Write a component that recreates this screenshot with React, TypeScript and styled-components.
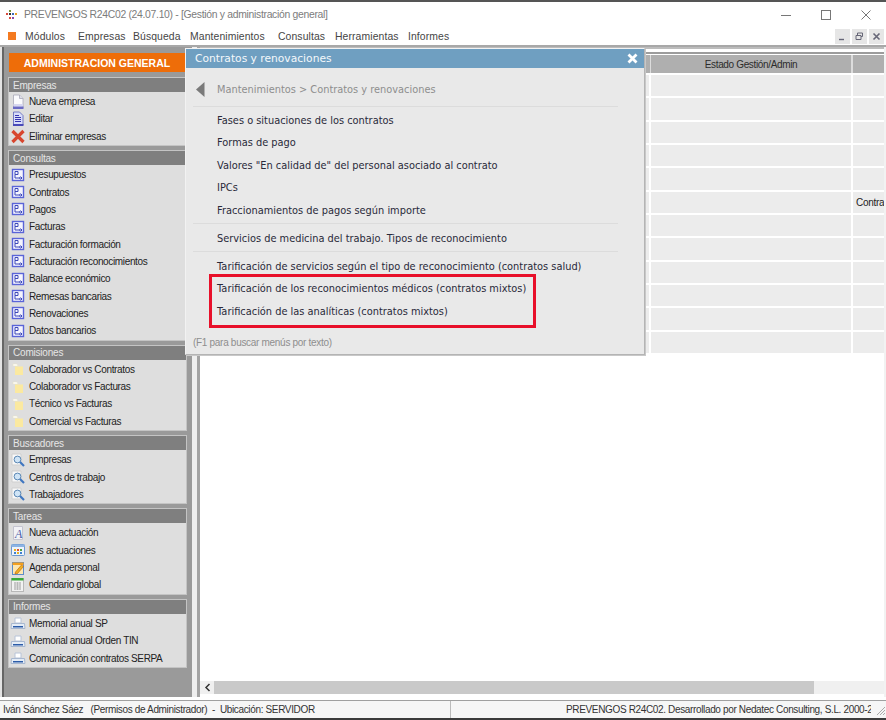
import React from 'react';
import styled, { createGlobalStyle } from 'styled-components';

const Global = createGlobalStyle`
  html, body { margin: 0; padding: 0; background: #fff; }
  * { box-sizing: border-box; }
`;

const Win = styled.div`
  position: relative;
  width: 886px;
  height: 720px;
  display: flex;
  flex-direction: column;
  overflow: hidden;
  background: #fff;
  border-top: 2px solid #555;
  border-bottom: 2px solid #3c3c3c;
`;
const TitleBar = styled.div`
  height: 25px;
  display: flex;
  align-items: center;
  padding-left: 6px;
  font: 10.4px "Liberation Sans", sans-serif;
  letter-spacing: -0.31px;
  color: #7c7c7c;
  gap: 6px;
  white-space: pre;
`;
const WinBtns = styled.div`
  margin-left: auto;
  display: flex;
  align-items: center;
  padding-right: 15px;
  gap: 30px;
`;
const MenuBar = styled.div`
  height: 18px;
  display: flex;
  align-items: center;
  padding-left: 8px;
  font: 10.4px "Liberation Sans", sans-serif;
  letter-spacing: 0.1px;
  color: #454545;
`;
const MenuMark = styled.div`
  width: 8px;
  height: 8px;
  background: #f47a20;
  margin-right: 9px;
`;
const MenuItem = styled.span<{ $w: number }>`
  width: ${p => p.$w}px;
  white-space: nowrap;
`;
const MdiBtns = styled.div`
  margin-left: auto;
  display: flex;
  gap: 2px;
  padding-right: 2px;
`;
const MdiBtn = styled.div`
  width: 15px;
  height: 15px;
  background: #e6e6e6;
  display: flex;
  align-items: center;
  justify-content: center;
`;
const Workspace = styled.div`
  height: 653px;
  display: flex;
  border-top: 2px solid #a8a8a8;
  background: #fff;
`;
const Sidebar = styled.div`
  width: 192px;
  height: 650px;
  background: #9a9a9a;
  border-left: 2px solid #e4e4e4;
  box-shadow: inset 2px 0 0 #666;
  padding: 6px 5px 0 6px;
  display: flex;
  flex-direction: column;
`;
const Brand = styled.div`
  height: 19px;
  width: 176px;
  margin-left: 1px;
  background: #ee6d09;
  color: #fff;
  font: bold 10.5px "Liberation Sans", sans-serif;
  display: flex;
  align-items: center;
  justify-content: center;
  margin-bottom: 5px;
`;
const Panel = styled.div`
  background: #dedede;
  border: 1px solid #c4c4c4;
  margin-bottom: 4px;
  padding-bottom: 0.2px;
`;
const PanelHead = styled.div`
  height: 14px;
  background: #7f7f7f;
  color: #e6e6e6;
  font: 10px "Liberation Sans", sans-serif;
  letter-spacing: -0.2px;
  padding-left: 4px;
  display: flex;
  align-items: center;
  margin-bottom: 1px;
`;
const PanelRow = styled.div`
  height: 17.33px;
  display: flex;
  align-items: center;
  font: 10px "Liberation Sans", sans-serif;
  letter-spacing: -0.35px;
  color: #222;
  padding-left: 1px;
  gap: 3px;
  white-space: nowrap;
`;
const Splitter = styled.div`
  width: 8px;
  height: 650px;
  background: #efefef;
  border-right: 3px solid #a4a4a4;
  flex: none;
`;
const GridArea = styled.div`
  flex: 1;
  min-width: 0;
  display: flex;
  flex-direction: column;
  height: 650px;
  border-right: 2px solid #f2f2f2;
`;
const GridRules = styled.div`
  height: 7px;
  flex: none;
  border-top: 2px solid #bcbcbc;
  border-bottom: 2px solid #9c9c9c;
`;
const GridBody = styled.div`
  flex: 1;
  overflow: hidden;
`;
const HeadRow = styled.div`
  display: grid;
  grid-template-columns: 450px 1px 200px 2px 1fr;
  height: 18px;
  margin-top: 1px;
  margin-bottom: 2px;
  background: #afafaf;
  font: 10px "Liberation Sans", sans-serif;
  color: #2c2c2c;
`;
const HeadCell = styled.div`
  display: flex;
  align-items: center;
  justify-content: center;
  letter-spacing: -0.35px;
`;
const HeadRule = styled.div`
  background: #dcdcdc;
`;
const Row = styled.div`
  display: grid;
  grid-template-columns: 449px 200px 1fr;
  gap: 2px;
  height: 21.33px;
  margin-bottom: 2px;
`;
const Cell = styled.div`
  background: #ececec;
  font: 10px "Liberation Sans", sans-serif;
  letter-spacing: -0.3px;
  color: #222;
  padding-left: 3px;
  display: flex;
  align-items: center;
  overflow: hidden;
  white-space: nowrap;
`;
const HScroll = styled.div`
  height: 13px;
  margin-bottom: 3px;
  display: flex;
  background: #f0f0f0;
  flex: none;
`;
const ScrollBtn = styled.div`
  width: 14px;
  display: flex;
  align-items: center;
  justify-content: center;
`;
const ScrollThumb = styled.div`
  width: 600px;
  background: #c9c9c9;
`;
const StatusBar = styled.div`
  height: 18px;
  margin-top: 2px;
  border-top: 1px solid #a0a0a0;
  display: flex;
  align-items: center;
  background: #f6f6f6;
  font: 10px "Liberation Sans", sans-serif;
  letter-spacing: -0.35px;
  color: #333;
  white-space: nowrap;
`;
const StatusLeft = styled.div`
  width: 451px;
  padding-left: 3px;
  white-space: pre;
  border-right: 1px solid #bbb;
  height: 100%;
  display: flex;
  align-items: center;
`;
const StatusRight = styled.div`
  width: 420px;
  padding-left: 115px;
  overflow: hidden;
  height: 100%;
  display: flex;
  align-items: center;
`;
const Grip = styled.svg`
  margin-left: auto;
  flex: none;
`;
const Popup = styled.div`
  position: absolute;
  left: 185px;
  top: 46px;
  width: 460px;
  height: 307px;
  background: #e9e9e9;
  border: 1px solid #f2f2f2;
  border-right-color: #b4b4b4;
  border-bottom-color: #b4b4b4;
  box-shadow: 1px 1px 0 #c8c8c8;
  display: flex;
  flex-direction: column;
`;
const PopHead = styled.div`
  height: 19px;
  background: #6f9fc1;
  color: #f4f8fb;
  font: 10.7px "DejaVu Sans", sans-serif;
  display: flex;
  align-items: center;
  padding: 0 6px 0 9px;
  justify-content: space-between;
  flex: none;
`;
const Crumb = styled.div`
  height: 38px;
  flex: none;
  display: flex;
  align-items: center;
  padding: 5px 0 0 10px;
  gap: 12px;
  font: 9.8px "DejaVu Sans", sans-serif;
  color: #8e8e8e;
`;
const Sep = styled.div`
  height: 1px;
  background: #dcdcdc;
  margin: 0 26px 0 7px;
  flex: none;
`;
const Group = styled.div<{ $top: number; $bottom: number }>`
  padding: ${p => p.$top}px 0 ${p => p.$bottom}px 31px;
  flex: none;
`;
const Item = styled.div`
  height: 22.5px;
  display: flex;
  align-items: center;
  font: 9.82px "DejaVu Sans", sans-serif;
  color: #2a2a3a;
  white-space: nowrap;
`;
const Hint = styled.div`
  font: 10px "Liberation Sans", sans-serif;
  letter-spacing: -0.3px;
  color: #8e8e8e;
  padding: 15px 0 0 7px;
`;
const Annotation = styled.div`
  position: absolute;
  left: 23px;
  top: 225px;
  width: 327px;
  height: 54px;
  border: 3px solid #e8102a;
  pointer-events: none;
`;

type Kind = 'new' | 'edit' | 'del' | 'report' | 'folder' | 'search' | 'note' | 'grid' | 'agenda' | 'cal' | 'print';

const Icon = ({ k }: { k: Kind }) => (
  <svg width="16" height="16" viewBox="0 0 16 16" style={{ flex: 'none' }}>
    {k === 'new' && <>
      <path d="M3.5 1h6l3.5 3.5V14h-9.5z" fill="#fbfbfd" stroke="#a8a8b8" strokeWidth=".8" />
      <path d="M9.5 1v3.5H13" fill="#dcdce8" stroke="#a8a8b8" strokeWidth=".8" />
      <path d="M3.5 10h9.5v2.5H3.5z" fill="#d8d8f0" />
      <path d="M3 12.5h10.5V15H3z" fill="#6a6ac4" />
    </>}
    {k === 'edit' && <>
      <path d="M3.5 1h6l3.5 3.5V14h-9.5z" fill="#d8dcfa" stroke="#5860b8" strokeWidth=".8" />
      <path d="M5 4.5h4M5 6.5h6M5 8.5h6M5 10.5h6" stroke="#3434b0" strokeWidth="1.1" />
      <path d="M3 13h10.5v2H3z" fill="#4a4ab8" />
    </>}
    {k === 'del' && <path d="M2.5 3l11 11M13.5 3l-11 11" stroke="#d8462e" strokeWidth="3.2" />}
    {k === 'report' && <>
      <rect x="2.5" y="2.5" width="11" height="11" fill="#f4f4ff" stroke="#5a64d8" strokeWidth="1.4" />
      <path d="M5 4.5h3v3H5zM5 7.5v3.5h5" fill="none" stroke="#3c48b8" strokeWidth="1" />
      <path d="M9 11l2 0M10.5 9.5l1.5 1.5-1.5 1.5" fill="none" stroke="#3c48b8" strokeWidth="1" />
    </>}
    {k === 'folder' && <>
      <path d="M3 3h4l1 2h-5z" fill="#fff" stroke="#e8e2c8" strokeWidth=".6" />
      <rect x="5" y="5.5" width="8" height="8.5" fill="#fbe9a0" />
    </>}
    {k === 'search' && <>
      <path d="M2 2h9v11H2z" fill="#f8f8f8" stroke="#cfcfcf" />
      <circle cx="7.5" cy="7.5" r="3.4" fill="#cfe4f6" stroke="#5c88b4" />
      <path d="M10 10l4 4" stroke="#3f76c0" strokeWidth="2.2" />
    </>}
    {k === 'note' && <>
      <path d="M3.5 1.5h9v13h-9z" fill="#f2f2f6" stroke="#c4c4d0" />
      <text x="5" y="13" fontFamily="Liberation Serif, serif" fontStyle="italic" fontSize="12" fill="#4a5ca8">A</text>
    </>}
    {k === 'grid' && <>
      <rect x="1.5" y="2.5" width="13" height="11" rx="1" fill="#eef4fb" stroke="#6c98d0" />
      <rect x="1.5" y="2.5" width="13" height="2.5" fill="#8cb4e4" />
      <path d="M4 7h2v2H4z" fill="#e8b020" /><path d="M7 7h2v2H7z" fill="#e05030" /><path d="M10 7h2v2h-2z" fill="#50a040" />
      <path d="M4 10h2v2H4z" fill="#4080d0" /><path d="M7 10h2v2H7z" fill="#e8b020" /><path d="M10 10h2v2h-2z" fill="#4080d0" />
    </>}
    {k === 'agenda' && <>
      <rect x="2.5" y="2.5" width="11" height="12" fill="#fde6b0" stroke="#5c8cc8" />
      <rect x="2.5" y="2.5" width="11" height="2.5" fill="#f4a020" />
      <path d="M5.5 12l6-7 2 1.5-6 7-2.5.5z" fill="#f0b020" stroke="#c06810" strokeWidth=".7" />
    </>}
    {k === 'cal' && <>
      <rect x="1.5" y="1.5" width="12" height="13" fill="#f2f2f2" stroke="#b8b8b8" />
      <rect x="1.5" y="1" width="12" height="2.5" fill="#38a838" />
      <path d="M4 6h7M4 8h7M4 10h7M4 12h7M5 5v8M7.5 5v8M10 5v8" stroke="#b0b0b0" strokeWidth=".8" />
    </>}
    {k === 'print' && <>
      <path d="M5 3h6v5H5z" fill="#fff" stroke="#b8c4d8" />
      <path d="M1.5 8.5h13l.5 5H1z" fill="#e4ecf6" stroke="#a8b8d0" />
      <path d="M3 11h10v1.5H3z" fill="#2c5ca8" />
    </>}
  </svg>
);

const groups: { title: string; rows: [Kind, string][] }[] = [
  { title: 'Empresas', rows: [['new', 'Nueva empresa'], ['edit', 'Editar'], ['del', 'Eliminar empresas']] },
  { title: 'Consultas', rows: ['Presupuestos', 'Contratos', 'Pagos', 'Facturas', 'Facturación formación', 'Facturación reconocimientos', 'Balance económico', 'Remesas bancarias', 'Renovaciones', 'Datos bancarios'].map(t => ['report', t] as [Kind, string]) },
  { title: 'Comisiones', rows: ['Colaborador vs Contratos', 'Colaborador vs Facturas', 'Técnico vs Facturas', 'Comercial vs Facturas'].map(t => ['folder', t] as [Kind, string]) },
  { title: 'Buscadores', rows: ['Empresas', 'Centros de trabajo', 'Trabajadores'].map(t => ['search', t] as [Kind, string]) },
  { title: 'Tareas', rows: [['note', 'Nueva actuación'], ['grid', 'Mis actuaciones'], ['agenda', 'Agenda personal'], ['cal', 'Calendario global']] },
  { title: 'Informes', rows: ['Memorial anual SP', 'Memorial anual Orden TIN', 'Comunicación contratos SERPA'].map(t => ['print', t] as [Kind, string]) },
];

const menus: [string, number][] = [['Módulos', 53], ['Empresas', 55], ['Búsqueda', 57], ['Mantenimientos', 88], ['Consultas', 57], ['Herramientas', 73], ['Informes', 60]];

const Logo = () => (
  <svg width="12" height="10" viewBox="0 0 12 10">
    <rect x="0" y="3" width="2" height="2" fill="#d84a3a" />
    <rect x="3" y="0" width="2" height="2" fill="#7a9a3a" />
    <rect x="3" y="3" width="2" height="2" fill="#333" />
    <rect x="6" y="3" width="2" height="2" fill="#3a6ab8" />
    <rect x="9" y="3" width="2" height="2" fill="#e8a020" />
    <rect x="3" y="7" width="2" height="2" fill="#d84a3a" />
    <rect x="6" y="7" width="2" height="2" fill="#8a4aa8" />
  </svg>
);

export default function App() {
  return (
    <Win>
      <Global />
      <TitleBar>
        <Logo />
        <span>PREVENGOS R24C02 (24.07.10) - [Gestión y administración general]</span>
        <WinBtns>
          <svg width="10" height="10" viewBox="0 0 10 10"><path d="M0 5.5h10" stroke="#777" /></svg>
          <svg width="10" height="10" viewBox="0 0 10 10"><rect x=".5" y=".5" width="9" height="9" fill="none" stroke="#777" /></svg>
          <svg width="10" height="10" viewBox="0 0 10 10"><path d="M.5.5l9 9M9.5.5l-9 9" stroke="#777" /></svg>
        </WinBtns>
      </TitleBar>
      <MenuBar>
        <MenuMark />
        {menus.map(([m, w]) => <MenuItem key={m} $w={w}>{m}</MenuItem>)}
        <MdiBtns>
          <MdiBtn><svg width="9" height="9" viewBox="0 0 9 9"><path d="M1 7.5h5" stroke="#667" strokeWidth="1.4" /></svg></MdiBtn>
          <MdiBtn><svg width="9" height="9" viewBox="0 0 9 9"><path d="M2.5 3V1h5v3.5H6M1 3.5h5v4H1z" fill="none" stroke="#667" /></svg></MdiBtn>
          <MdiBtn><svg width="9" height="9" viewBox="0 0 9 9"><path d="M1.5 1.5l6 6M7.5 1.5l-6 6" stroke="#667" strokeWidth="1.6" /></svg></MdiBtn>
        </MdiBtns>
      </MenuBar>
      <Workspace>
        <Sidebar>
          <Brand>ADMINISTRACION GENERAL</Brand>
          {groups.map(g => (
            <Panel key={g.title}>
              <PanelHead>{g.title}</PanelHead>
              {g.rows.map(([k, t]) => (
                <PanelRow key={t}><Icon k={k} />{t}</PanelRow>
              ))}
            </Panel>
          ))}
        </Sidebar>
        <Splitter />
        <GridArea>
          <GridRules />
          <GridBody>
            <HeadRow>
              <HeadCell />
              <HeadRule />
              <HeadCell>Estado Gestión/Admin</HeadCell>
              <HeadRule />
              <HeadCell />
            </HeadRow>
            {Array.from({ length: 12 }, (_, i) => (
              <Row key={i}>
                <Cell />
                <Cell />
                <Cell>{i === 5 ? 'Contrato' : ''}</Cell>
              </Row>
            ))}
          </GridBody>
          <HScroll>
            <ScrollBtn><svg width="7" height="9" viewBox="0 0 7 9"><path d="M5.5 1L2 4.5 5.5 8" fill="none" stroke="#333" strokeWidth="1.5" /></svg></ScrollBtn>
            <ScrollThumb />
          </HScroll>
        </GridArea>
      </Workspace>
      <StatusBar>
        <StatusLeft>Iván Sánchez Sáez   (Permisos de Administrador)  -  Ubicación: SERVIDOR</StatusLeft>
        <StatusRight>PREVENGOS R24C02. Desarrollado por Nedatec Consulting, S.L. 2000-2024</StatusRight>
        <Grip width="12" height="12" viewBox="0 0 12 12"><path d="M11 3l-8 8M11 6l-5 5M11 9l-2 2" stroke="#aaa" /></Grip>
      </StatusBar>
      <Popup>
        <PopHead>
          Contratos y renovaciones
          <svg width="11" height="11" viewBox="0 0 11 11"><path d="M1.5 1.5l8 8M9.5 1.5l-8 8" stroke="#fff" strokeWidth="2.8" /></svg>
        </PopHead>
        <Crumb>
          <svg width="9" height="15" viewBox="0 0 9 15"><path d="M8.5 0v15L0 7.5z" fill="#7a7a7a" /></svg>
          Mantenimientos &gt; Contratos y renovaciones
        </Crumb>
        <Sep />
        <Group $top={1.75} $bottom={1.75}>
          <Item>Fases o situaciones de los contratos</Item>
          <Item>Formas de pago</Item>
          <Item>Valores "En calidad de" del personal asociado al contrato</Item>
          <Item>IPCs</Item>
          <Item>Fraccionamientos de pagos según importe</Item>
        </Group>
        <Sep />
        <Group $top={2.75} $bottom={1.75}>
          <Item>Servicios de medicina del trabajo. Tipos de reconocimiento</Item>
        </Group>
        <Sep />
        <Group $top={2.75} $bottom={0}>
          <Item>Tarificación de servicios según el tipo de reconocimiento (contratos salud)</Item>
          <Item>Tarificación de los reconocimientos médicos (contratos mixtos)</Item>
          <Item>Tarificación de las analíticas (contratos mixtos)</Item>
        </Group>
        <Hint>(F1 para buscar menús por texto)</Hint>
        <Annotation />
      </Popup>
    </Win>
  );
}
